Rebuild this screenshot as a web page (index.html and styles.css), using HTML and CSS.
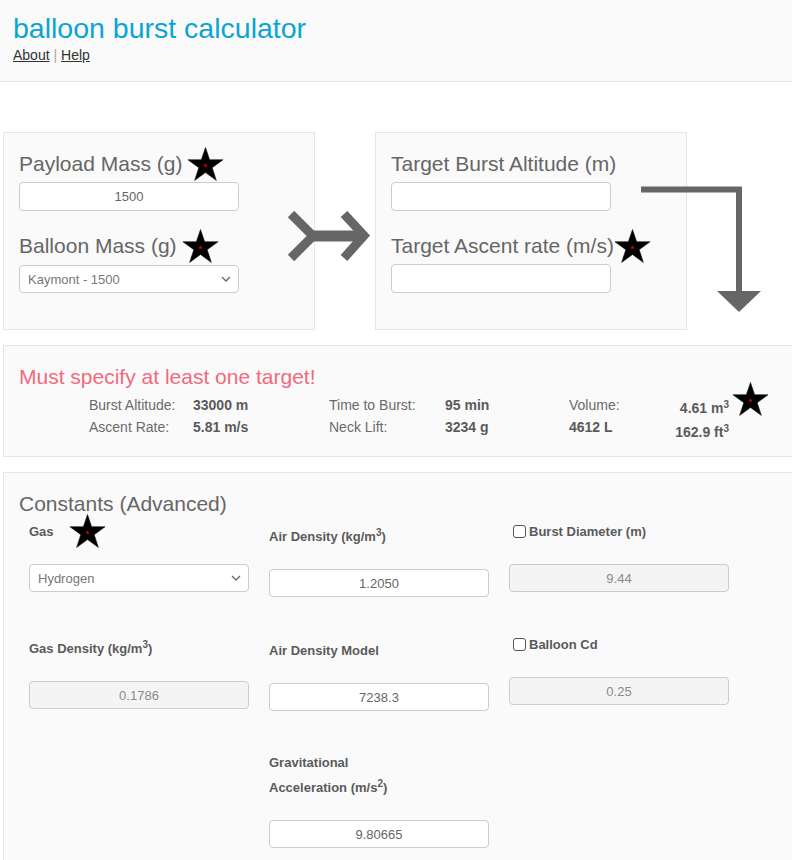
FILE: index.html
```html
<!DOCTYPE html>
<html lang="en">
<head>
<meta charset="utf-8">
<title>balloon burst calculator</title>
<link rel="stylesheet" href="styles.css">
</head>
<body>
<svg class="defs" width="0" height="0" aria-hidden="true">
  <defs>
    <symbol id="star" viewBox="0 0 38 36">
      <polygon points="19,0.5 23.27,13.13 37.07,13.13 25.9,21.24 30.17,34.37 19,26.26 7.83,34.37 12.1,21.24 0.93,13.13 14.73,13.13" fill="#000" stroke="#111" stroke-width="0.6"/>
      <polygon transform="translate(19 19) scale(0.13) translate(-19 -19)" points="19,0.5 23.27,13.13 37.07,13.13 25.9,21.24 30.17,34.37 19,26.26 7.83,34.37 12.1,21.24 0.93,13.13 14.73,13.13" fill="#e00000"/>
    </symbol>
    <symbol id="chev" viewBox="0 0 10 6">
      <path d="M1 1 L5 5 L9 1" fill="none" stroke="#666" stroke-width="1.3"/>
    </symbol>
  </defs>
</svg>

<header class="top">
  <h1 class="title">balloon burst calculator</h1>
  <nav class="links"><a href="#">About</a> <span class="sep">|</span> <a href="#">Help</a></nav>
</header>

<main class="page">
  <section class="inputs-row">
    <div class="box entry">
      <div class="field-label">Payload Mass (g) <svg class="star"><use href="#star"/></svg></div>
      <input class="ctl" type="text" value="1500">
      <div class="field-label second">Balloon Mass (g) <svg class="star"><use href="#star"/></svg></div>
      <div class="select-wrap">
        <select class="ctl sel"><option>Kaymont - 1500</option></select>
        <svg class="chev"><use href="#chev"/></svg>
      </div>
    </div>

    <svg class="arrow-right" viewBox="0 0 86 52" width="86" height="52">
      <polyline points="4,3 26,25 4,47" fill="none" stroke="#666" stroke-width="9" stroke-linejoin="miter"/>
      <line x1="24" y1="25" x2="78" y2="25" stroke="#666" stroke-width="11"/>
      <polyline points="57,3 77,24.5 57,47" fill="none" stroke="#666" stroke-width="9" stroke-linejoin="miter"/>
    </svg>

    <div class="box entry">
      <div class="field-label">Target Burst Altitude (m)</div>
      <input class="ctl" type="text" value="">
      <div class="field-label second tight">Target Ascent rate (m/s)<svg class="star"><use href="#star"/></svg></div>
      <input class="ctl" type="text" value="">
    </div>

    <svg class="arrow-down" viewBox="0 0 124 130" width="124" height="130">
      <path d="M1 4.5 H99 V108" fill="none" stroke="#666" stroke-width="6" stroke-linejoin="miter"/>
      <polygon points="77,106 121,106 99,127" fill="#666"/>
    </svg>
  </section>

  <section class="box results">
    <div class="warn">Must specify at least one target!</div>
    <div class="stats">
      <span>Burst Altitude:</span><b>33000 m</b>
      <span>Time to Burst:</span><b>95 min</b>
      <span>Volume:</span><b class="vol">4.61 m<sup>3</sup></b>
      <span class="stat-star"><svg class="star"><use href="#star"/></svg></span>

      <span>Ascent Rate:</span><b>5.81 m/s</b>
      <span>Neck Lift:</span><b>3234 g</b>
      <b>4612 L</b><b class="vol low">162.9 ft<sup>3</sup></b>
      <span></span>
    </div>
  </section>

  <section class="box constants">
    <h2 class="section-title">Constants (Advanced)</h2>
    <div class="grid">
      <div class="cell">
        <label class="clabel">Gas <svg class="star inline-star"><use href="#star"/></svg></label>
        <div class="select-wrap">
          <select class="ctl sel"><option>Hydrogen</option></select>
          <svg class="chev"><use href="#chev"/></svg>
        </div>
      </div>
      <div class="cell">
        <label class="clabel lower">Air Density (kg/m<sup>3</sup>)</label>
        <input class="ctl" type="text" value="1.2050">
      </div>
      <div class="cell">
        <label class="clabel check"><input type="checkbox" class="cb">Burst Diameter (m)</label>
        <input class="ctl" type="text" value="9.44" disabled>
      </div>

      <div class="cell">
        <label class="clabel">Gas Density (kg/m<sup>3</sup>)</label>
        <input class="ctl" type="text" value="0.1786" disabled>
      </div>
      <div class="cell">
        <label class="clabel nudge">Air Density Model</label>
        <input class="ctl" type="text" value="7238.3">
      </div>
      <div class="cell raised">
        <label class="clabel check"><input type="checkbox" class="cb">Balloon Cd</label>
        <input class="ctl" type="text" value="0.25" disabled>
      </div>

      <div class="cell"></div>
      <div class="cell">
        <label class="clabel">Gravitational<br>Acceleration (m/s<sup>2</sup>)</label>
        <input class="ctl" type="text" value="9.80665">
      </div>
      <div class="cell"></div>
    </div>
  </section>
</main>
</body>
</html>
```

FILE: styles.css
```css
* {
  box-sizing: border-box;
}

html, body {
  overflow-x: hidden;
}

body {
  margin: 0;
  font-family: "Liberation Sans", Arial, Helvetica, sans-serif;
  color: #555;
  background: #fff;
}

.defs {
  position: absolute;
  width: 0;
  height: 0;
  overflow: hidden;
}

/* header */
.top {
  background: #fafafa;
  border-bottom: 1px solid #e5e5e5;
  padding: 11px 13px 16px;
}

.title {
  margin: 0;
  font-weight: normal;
  font-size: 28.5px;
  line-height: 34px;
  color: #0ba5d3;
}

.links {
  font-size: 14px;
  line-height: 20px;
  color: #aaa;
}

.links a {
  color: #333;
  text-decoration: underline;
}

/* page */
.page {
  padding: 50px 0 0 3px;
}

.box {
  background: #fafafa;
  border: 1px solid #e6e6e6;
}

.inputs-row {
  display: flex;
  gap: 60px;
  position: relative;
}

.entry {
  width: 312px;
  height: 198px;
  padding: 13px 15px 0;
}

.field-label {
  display: flex;
  align-items: center;
  height: 36px;
  font-size: 21px;
  color: #666;
  gap: 5px;
  white-space: nowrap;
}

.field-label.tight {
  gap: 0;
}

.field-label.second {
  margin-top: 17px;
}

.star {
  width: 37px;
  height: 35px;
  flex: none;
}

.ctl {
  display: block;
  width: 220px;
  height: 29px;
  margin: 0;
  padding: 0 8px;
  border: 1px solid #ccc;
  border-radius: 4px;
  background: #fff;
  font-family: "Liberation Sans", Arial, sans-serif;
  font-size: 13px;
  color: #666;
  text-align: center;
  outline: none;
}

.ctl:disabled {
  background: #f4f4f4;
  color: #8a8a8a;
  -webkit-text-fill-color: #8a8a8a;
  opacity: 1;
}

.select-wrap {
  position: relative;
  width: 220px;
  margin-top: 1px;
}

.select-wrap .sel {
  margin: 0;
  height: 28px;
  -webkit-appearance: none;
  appearance: none;
  text-align: left;
  color: #777;
  padding-left: 8px;
}

.chev {
  position: absolute;
  right: 8px;
  top: 11px;
  width: 10px;
  height: 6px;
  pointer-events: none;
}

.arrow-right {
  position: absolute;
  left: 284px;
  top: 79px;
}

.arrow-down {
  position: absolute;
  left: 637px;
  top: 53px;
}

/* results */
.results {
  margin-top: 15px;
  border-right: 0;
  padding: 19px 15px 18px;
}

.warn {
  font-size: 21px;
  line-height: 24px;
  color: #f26a7c;
}

.stats {
  display: grid;
  grid-template-columns: 104px 136px 116px 124px 60px 100px 39px;
  grid-auto-rows: 22px;
  margin: 5px 0 0 70px;
  font-size: 14px;
  line-height: 22px;
  color: #6a6a6a;
  white-space: nowrap;
}

.stats b {
  color: #5a5a5a;
}

.stats .vol {
  text-align: right;
  padding-top: 3px;
}

.stats .vol.low {
  padding-top: 5px;
}

sup {
  font-size: 10px;
  line-height: 0;
  vertical-align: 5px;
}

.stat-star {
  padding-left: 3px;
  margin-top: -12px;
  height: 36px;
}

/* constants */
.constants {
  margin-top: 15px;
  border-right: 0;
  padding: 19px 15px 40px;
}

.section-title {
  margin: 0 0 3px;
  font-weight: normal;
  font-size: 21px;
  line-height: 24px;
  color: #666;
}

.grid {
  display: grid;
  grid-template-columns: repeat(3, 220px);
  column-gap: 20px;
  row-gap: 39px;
  margin-left: 10px;
  align-items: start;
}

.clabel {
  display: block;
  font-size: 13px;
  font-weight: bold;
  line-height: 25px;
  color: #5a5a5a;
  white-space: nowrap;
}

.clabel.lower {
  padding-top: 5px;
}

.clabel.nudge {
  padding-top: 2px;
}

.cell .ctl {
  margin-top: 20px;
  height: 28px;
}

.cell .select-wrap {
  margin-top: 20px;
}

.cell .select-wrap .sel {
  margin-top: 0;
}

.cell.raised {
  margin-top: -4px;
}

.inline-star {
  vertical-align: middle;
  margin: -8px 0 -6px 12px;
}

.check {
  display: flex;
  align-items: center;
}

.cb {
  -webkit-appearance: none;
  appearance: none;
  width: 13px;
  height: 13px;
  margin: 0 3px 0 4px;
  border: 1px solid #555;
  border-radius: 3px;
  background: #fff;
}
```
